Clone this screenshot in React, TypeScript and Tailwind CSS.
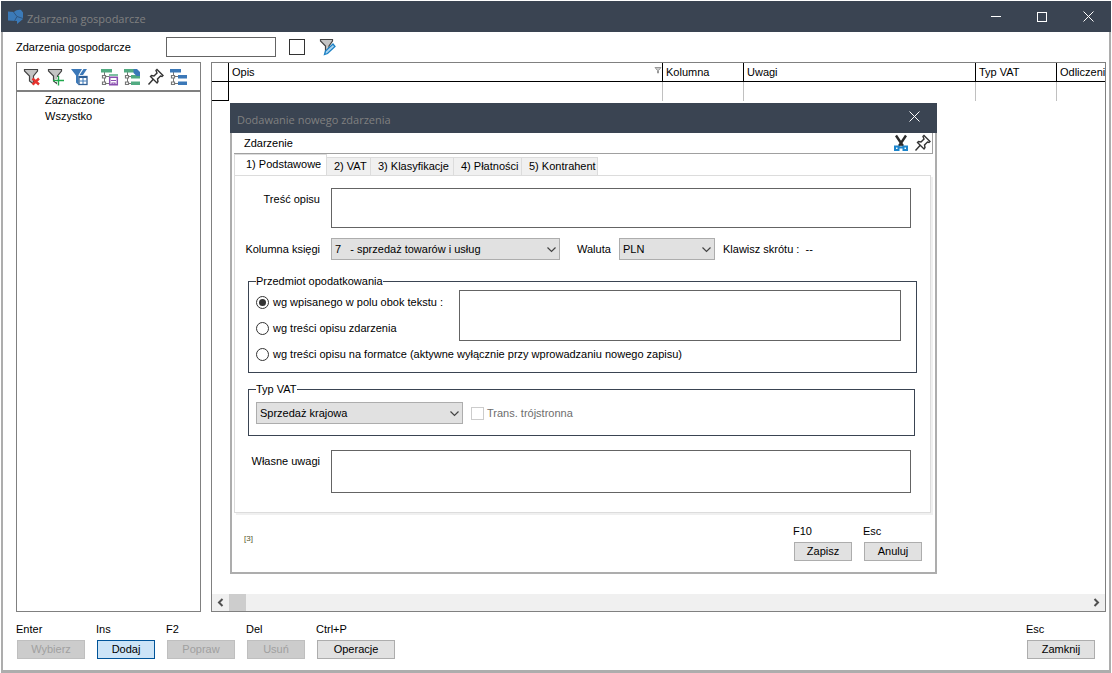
import React, { useState } from 'react';
import clsx from 'clsx';

const FilterShape: React.FC = () => (
  <path d="M1.5 1.5h13v1.500L10.500 8v8L6.500 13V8L1.500 3z" fill="#c4c4c4" stroke="#444" strokeWidth="1.2" />
);

const FilterRemoveIcon: React.FC = () => (
  <svg width="18" height="18" viewBox="0 0 18 18">
    <FilterShape />
    <path d="M9.500 10.500l6.500 6M16 10.500l-6.500 6" stroke="#e5322d" strokeWidth="2.400" />
  </svg>
);

const FilterAddIcon: React.FC = () => (
  <svg width="18" height="18" viewBox="0 0 18 18">
    <FilterShape />
    <path d="M8 12.500h8M11.500 9v8" stroke="#fff" strokeWidth="3" />
    <path d="M6 12.500h11M11.500 8v9.500" stroke="#1fa84c" strokeWidth="1.400" />
  </svg>
);

const FilterTableIcon: React.FC = () => (
  <svg width="18" height="18" viewBox="0 0 18 18">
    <path d="M0 1h11L7.500 7v10L5 14.500V7.500z" fill="#3b78b8" />
    <path d="M12.500 1H16L12 7H8.500z" fill="#3b78b8" />
    <rect x="8" y="8.500" width="8" height="8" fill="#fff" stroke="#2f5f96" strokeWidth="1.300" />
    <path d="M8 9h8" stroke="#2f5f96" strokeWidth="2" />
    <path d="M12 10v6M8.500 13h7" stroke="#3b78b8" />
  </svg>
);

const FilterEditIcon: React.FC = () => (
  <svg width="18" height="18" viewBox="0 0 18 18">
    <path d="M1.500 1.500h12v1.500L10 8v4L6.500 15V8L1.500 3z" fill="#c4c4c4" stroke="#444" strokeWidth="1.200" />
    <path d="M5.500 16.500l1-3.500 7.500-7 2 2.500-7.500 7z" fill="#a9d4f2" stroke="#1c81c4" strokeWidth="1.300" />
  </svg>
);

const TreeLines: React.FC = () => (
  <>
    <path d="M3.500 4v12M3.500 8.500h5M3.500 15.500h5" stroke="#777" />
    <path d="M1.500 7.500h3v2.500h-3zM1.500 14h3v2.500h-3z" fill="#fff" stroke="#777" strokeWidth="1.200" />
  </>
);

const TreeSaveIcon: React.FC = () => (
  <svg width="18" height="18" viewBox="0 0 18 18">
    <TreeLines />
    <path d="M0 1h11v3.500H0z" fill="#52ab82" />
    <path d="M8 7h9" stroke="#52ab82" strokeWidth="1.500" />
    <path d="M8.700 9.200h7.600v7.500H8.700z" fill="#fff" stroke="#8a4fb0" strokeWidth="1.500" />
    <path d="M10 12.500h5M11 16.500V15h3v1.500" fill="none" stroke="#8a4fb0" strokeWidth="1.200" />
  </svg>
);

const TreeLoadIcon: React.FC = () => (
  <svg width="18" height="18" viewBox="0 0 18 18">
    <TreeLines />
    <path d="M0 1h11v3.500H0zM7 7h9v3.500H7zM7 13.500h9V17H7z" fill="#52ab82" />
    <path d="M9.500 1h3.500l3 3v4h-3.500l-3-3z" fill="#3b78b8" />
  </svg>
);

const TreeIcon: React.FC = () => (
  <svg width="18" height="18" viewBox="0 0 18 18">
    <TreeLines />
    <path d="M0 1h11v3.500H0zM8 7h9v3.500H8zM8 13.500h9V17H8z" fill="#3b78b8" />
  </svg>
);

const PinIcon: React.FC = () => (
  <svg width="18" height="18" viewBox="0 0 18 18">
    <path
      d="M10 1.500l6 6-1 1-1.500-.5-3 3 .5 2.500-1 1.500-6.500-6.500L4.500 7.500l2.500.5 3-3-1-2.500zM6 11.500L1.500 16.500"
      fill="none"
      stroke="#333"
      strokeWidth="1.400"
    />
  </svg>
);

const ScissorsIcon: React.FC = () => (
  <svg width="18" height="18" viewBox="0 0 18 18">
    <path d="M4 1.500L11 12M14 1.500L7 12" stroke="#2b2b2b" strokeWidth="2.400" />
    <path d="M3 12.500h3.500v3.500H3zM11.500 12.500H15V16h-3.500z" fill="#fff" stroke="#1c85cc" strokeWidth="2" />
    <path d="M7 13.500h4" stroke="#1c85cc" strokeWidth="2" />
  </svg>
);

const LogoIcon: React.FC = () => (
  <svg width="16" height="16" viewBox="0 0 16 16">
    <path d="M0 2.500l6 .5C8 1 11 .500 13 1l2 2.500V10L9 15V12L0 11.500z" fill="#3b7ab8" />
    <path d="M5.500 3L9 7.500l6 2M9 7.500L6.500 12" stroke="#2f5580" fill="none" />
  </svg>
);

const CloseIcon: React.FC = () => (
  <svg width="11" height="11" viewBox="0 0 11 11">
    <path d="M.5.5l10 10M10.500.5l-10 10" stroke="#fff" />
  </svg>
);

const Arrow: React.FC<{ d: string }> = ({ d }) => (
  <svg width="7" height="9" viewBox="0 0 7 9">
    <path d={d} fill="none" stroke="#505050" strokeWidth="2" />
  </svg>
);

interface ButtonProps {
  hotkey: string;
  label: string;
  width: string;
  variant?: 'normal' | 'primary' | 'disabled';
  onClick?: () => void;
}

const HotkeyButton: React.FC<ButtonProps> = ({ hotkey, label, width, variant = 'normal', onClick }) => (
  <div className="flex flex-col gap-1">
    <span>{hotkey}</span>
    <button
      type="button"
      onClick={onClick}
      disabled={variant === 'disabled'}
      className={clsx(
        'ml-px h-[19px] border leading-none',
        width,
        variant === 'normal' && 'border-[#adadad] bg-[#e1e1e1]',
        variant === 'primary' && 'border-[#005499] bg-[#cce4f7]',
        variant === 'disabled' && 'border-[#bfbfbf] bg-[#cccccc] text-[#a0a0a0]'
      )}
    >
      {label}
    </button>
  </div>
);

interface SelectProps {
  id: string;
  width: string;
  options: string[];
  ariaLabel?: string;
}

const Select: React.FC<SelectProps> = ({ id, width, options, ariaLabel }) => (
  <div className={clsx('relative h-[22px]', width)}>
    <select
      id={id}
      aria-label={ariaLabel}
      className="h-full w-full appearance-none whitespace-pre border border-[#adadad] bg-[#e1e1e1] pl-[3px] pr-5 outline-none"
    >
      {options.map((option) => (
        <option key={option}>{option}</option>
      ))}
    </select>
    <svg className="pointer-events-none absolute right-1 top-[9px]" width="9" height="6" viewBox="0 0 9 6">
      <path d="M.5.5l4 4 4-4" fill="none" stroke="#444" strokeWidth="1.200" />
    </svg>
  </div>
);

const tabs = [
  { label: '1) Podstawowe', width: 'w-[93px]' },
  { label: '2) VAT', width: 'w-[44px]' },
  { label: '3) Klasyfikacje', width: 'w-[83px]' },
  { label: '4) Płatności', width: 'w-[68px]' },
  { label: '5) Kontrahent', width: 'w-[76px]' },
];

const subjects = [
  'wg wpisanego w polu obok tekstu :',
  'wg treści opisu zdarzenia',
  'wg treści opisu na formatce (aktywne wyłącznie przy wprowadzaniu nowego zapisu)',
];

const textareaClass = 'block resize-none border border-[#646464] bg-white px-1 outline-none';

const EventDialog: React.FC = () => {
  const [activeTab, setActiveTab] = useState(0);
  const [subject, setSubject] = useState(0);

  const renderSubject = (index: number) => (
    <label className={clsx('flex h-[26px] items-center gap-1', index === 2 && 'col-span-2')}>
      <input
        type="radio"
        name="subject"
        checked={subject === index}
        onChange={() => setSubject(index)}
        className="size-[13px] appearance-none rounded-full border border-[#333] bg-white bg-clip-content p-[2px] checked:bg-[#333]"
      />
      <span className="whitespace-nowrap">{subjects[index]}</span>
    </label>
  );

  return (
    <div
      role="dialog"
      aria-label="Dodawanie nowego zdarzenia"
      className="absolute left-[230px] top-[103px] w-[707px] bg-white"
    >
      <div className="flex h-[30px] items-center justify-between bg-[#3a4452] pl-[7px]">
        <h2 className="pt-1 font-['Open_Sans',sans-serif] text-[11px] text-[#808080]">Dodawanie nowego zdarzenia</h2>
        <button
          type="button"
          aria-label="Zamknij okno"
          className="flex h-[26px] w-[46px] items-center justify-center self-start"
        >
          <CloseIcon />
        </button>
      </div>

      <div className="border-x-2 border-b-2 border-[#adadad] px-[2px]">
        <div className="flex h-[21px] items-center justify-between border-b border-r border-[#a0a0a0] pl-[10px]">
          <span>Zdarzenie</span>
          <div className="flex gap-1">
            <button type="button" aria-label="Wytnij">
              <ScissorsIcon />
            </button>
            <button type="button" aria-label="Przypnij">
              <PinIcon />
            </button>
          </div>
        </div>

        <div role="tablist" className="flex h-[21px] items-end">
          {tabs.map((tab, i) => (
            <button
              key={tab.label}
              type="button"
              role="tab"
              aria-selected={i === activeTab}
              onClick={() => setActiveTab(i)}
              className={clsx(
                'whitespace-nowrap border-r border-t border-[#dcdcdc] pb-[2px] text-left',
                tab.width,
                i === activeTab ? 'h-[21px] border-l bg-white pl-[11px]' : 'h-[18px] bg-[#f0f0f0] pl-[7px]'
              )}
            >
              {tab.label}
            </button>
          ))}
        </div>

        <div className="mr-[2px] border border-[#dcdcdc] pb-[19px] pt-3 shadow-[2px_2px_0_#f0f0f0]">
          <div className="flex items-start gap-[11px] pr-[19px]">
            <label htmlFor="description" className="w-[85px] pt-1 text-right">
              Treść opisu
            </label>
            <textarea id="description" className={clsx(textareaClass, 'h-10 flex-1')} />
          </div>

          <div className="mt-[10px] flex items-center">
            <label htmlFor="column" className="w-[85px] text-right">
              Kolumna księgi
            </label>
            <div className="ml-[11px]">
              <Select id="column" width="w-[229px]" options={['7\u00a0\u00a0 - sprzedaż towarów i usług']} />
            </div>
            <label htmlFor="currency" className="ml-[17px] w-[42px]">
              Waluta
            </label>
            <Select id="currency" width="w-24" options={['PLN']} />
            <span className="ml-2">Klawisz skrótu :&nbsp; --</span>
          </div>

          <fieldset className="mx-[13px] mt-[14px] border border-[#3a4452] pb-[5px] pl-[7px] pr-[15px] pt-px">
            <legend>Przedmiot opodatkowania</legend>
            <div className="grid grid-cols-[203px_1fr]">
              {renderSubject(0)}
              <textarea
                aria-label="Przedmiot opodatkowania"
                className={clsx(textareaClass, 'row-span-2 mt-px h-[51px]')}
              />
              {renderSubject(1)}
              {renderSubject(2)}
            </div>
          </fieldset>

          <fieldset className="ml-[13px] mr-[15px] mt-[9px] border border-[#3a4452] pb-[11px] pl-[7px] pt-[6px]">
            <legend>Typ VAT</legend>
            <div className="flex items-center gap-2">
              <Select id="vat-type" width="w-[207px]" options={['Sprzedaż krajowa']} ariaLabel="Typ VAT" />
              <label className="flex items-center gap-[3px] text-[#6d6d6d]">
                <input type="checkbox" disabled className="size-[13px] appearance-none border border-[#ccc] bg-white" />
                Trans. trójstronna
              </label>
            </div>
          </fieldset>

          <div className="mt-[14px] flex items-start gap-[11px] pr-[19px]">
            <label htmlFor="notes" className="w-[85px] pt-1 text-right">
              Własne uwagi
            </label>
            <textarea id="notes" className={clsx(textareaClass, 'h-[43px] flex-1')} />
          </div>
        </div>

        <div className="flex items-start justify-between pb-[11px] pl-[10px] pr-[11px] pt-[11px]">
          <span className="pt-2 text-[8px] text-[#55552a]">[3]</span>
          <div className="flex gap-[11px]">
            <HotkeyButton hotkey="F10" label="Zapisz" width="w-[58px]" />
            <HotkeyButton hotkey="Esc" label="Anuluj" width="w-[58px]" />
          </div>
        </div>
      </div>
    </div>
  );
};

const toolbarGroups = [
  [
    { label: 'Usuń filtr', icon: <FilterRemoveIcon /> },
    { label: 'Dodaj filtr', icon: <FilterAddIcon /> },
    { label: 'Filtr tabeli', icon: <FilterTableIcon /> },
  ],
  [
    { label: 'Zapisz drzewo', icon: <TreeSaveIcon /> },
    { label: 'Wczytaj drzewo', icon: <TreeLoadIcon /> },
    { label: 'Przypnij', icon: <PinIcon /> },
    { label: 'Drzewo', icon: <TreeIcon /> },
  ],
];

const columns = [
  { label: 'Opis', width: 'w-[434px]' },
  { label: 'Kolumna', width: 'w-[81px]' },
  { label: 'Uwagi', width: 'w-[232px]' },
  { label: 'Typ VAT', width: 'w-[81px]' },
  { label: 'Odliczeni', width: '' },
];

const App: React.FC = () => (
  <div className="relative flex min-h-screen flex-col bg-white px-px pt-px font-['Liberation_Sans',Arial,sans-serif] text-[11px] leading-[14px] text-black">
    <header className="flex h-[31px] items-center justify-between bg-[#3a4452] pl-[7px]">
      <div className="flex items-center gap-[3px]">
        <LogoIcon />
        <h1 className="pt-1 font-['Open_Sans',sans-serif] text-[11px] text-[#808080]">Zdarzenia gospodarcze</h1>
      </div>
      <div className="flex h-full">
        <button type="button" aria-label="Minimalizuj" className="flex w-[46px] items-center justify-center">
          <span className="h-px w-[10px] bg-white" />
        </button>
        <button type="button" aria-label="Maksymalizuj" className="flex w-[46px] items-center justify-center">
          <span className="size-[10px] border border-white" />
        </button>
        <button type="button" aria-label="Zamknij okno" className="flex w-[46px] items-center justify-center">
          <CloseIcon />
        </button>
      </div>
    </header>

    <div className="flex flex-1 flex-col border-b-3 border-l-2 border-r-2 border-[#adadad]">
      <div className="flex h-[30px] items-center pl-[13px]">
        <label htmlFor="search" className="w-[150px]">
          Zdarzenia gospodarcze
        </label>
        <input id="search" type="text" className="h-5 w-[110px] border border-[#646464] px-1 outline-none" />
        <input
          type="checkbox"
          aria-label="Filtr aktywny"
          className="ml-[13px] size-4 appearance-none border border-[#333] bg-white"
        />
        <button type="button" aria-label="Edytuj filtr" className="ml-[14px]">
          <FilterEditIcon />
        </button>
      </div>

      <main className="flex flex-1 gap-[10px] pl-[13px] pr-[3px]">
        <aside className="w-[185px] border border-[#808080]">
          <div className="flex h-[29px] items-center gap-3 border-b-2 border-[#808080] pl-[6px]">
            {toolbarGroups.map((group, i) => (
              <div key={i} className={clsx('flex', i === 0 ? 'gap-[6px]' : 'gap-[5px]')}>
                {group.map((item) => (
                  <button key={item.label} type="button" aria-label={item.label}>
                    {item.icon}
                  </button>
                ))}
              </div>
            ))}
          </div>
          <ul className="pl-7 leading-4">
            <li>Zaznaczone</li>
            <li>Wszystko</li>
          </ul>
        </aside>

        <section className="flex min-w-0 flex-1 flex-col border border-[#808080]">
          <div className="flex-1 overflow-hidden">
            <table className="w-full table-fixed border-separate border-spacing-0 text-left">
              <thead>
                <tr className="h-[19px]">
                  <th className="w-[17px] border-b border-r border-black p-0" />
                  {columns.map((col) => (
                    <th
                      key={col.label}
                      className={clsx(
                        'overflow-hidden whitespace-nowrap border-b border-black p-0 pl-[3px] font-normal',
                        col.width,
                        col.width && 'border-r'
                      )}
                    >
                      <div className="flex items-center justify-between">
                        {col.label}
                        {col.label === 'Opis' && (
                          <svg className="-mt-1" width="8" height="8" viewBox="0 0 8 8">
                            <path d="M1 1.500h6L4.500 4.500V7h-1V4.500z" fill="#ccc" stroke="#999" />
                          </svg>
                        )}
                      </div>
                    </th>
                  ))}
                </tr>
              </thead>
              <tbody>
                <tr className="h-[19px]">
                  <td className="border-b border-r border-black p-0" />
                  {columns.map((col) => (
                    <td key={col.label} className={clsx('border-[#c0c0c0] p-0', col.width && 'border-r')} />
                  ))}
                </tr>
              </tbody>
            </table>
          </div>
          <div className="flex h-[17px] items-center bg-[#f0f0f0]">
            <button type="button" aria-label="Przewiń w lewo" className="flex w-[17px] justify-center">
              <Arrow d="M5.500 1L2 4.500 5.500 8" />
            </button>
            <div className="h-full flex-1">
              <div className="h-full w-[17px] bg-[#cdcdcd]" />
            </div>
            <button type="button" aria-label="Przewiń w prawo" className="flex w-[17px] justify-center">
              <Arrow d="M1.500 1L5 4.500 1.500 8" />
            </button>
          </div>
        </section>
      </main>

      <footer className="flex justify-between pb-[11px] pl-[13px] pr-[14px] pt-[10px]">
        <div className="flex gap-[11px]">
          <HotkeyButton hotkey="Enter" label="Wybierz" width="w-[68px]" variant="disabled" />
          <HotkeyButton hotkey="Ins" label="Dodaj" width="w-[58px]" variant="primary" />
          <HotkeyButton hotkey="F2" label="Popraw" width="w-[68px]" variant="disabled" />
          <HotkeyButton hotkey="Del" label="Usuń" width="w-[58px]" variant="disabled" />
          <HotkeyButton hotkey="Ctrl+P" label="Operacje" width="w-[78px]" />
        </div>
        <HotkeyButton hotkey="Esc" label="Zamknij" width="w-[68px]" />
      </footer>
    </div>

    <EventDialog />
  </div>
);

export default App;
